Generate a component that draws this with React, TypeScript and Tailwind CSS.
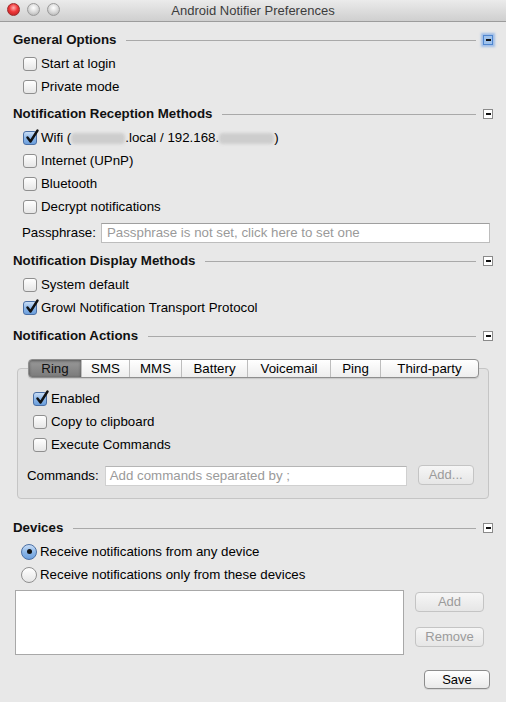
import React from 'react';

const Checkbox: React.FC<{ checked?: boolean }> = ({ checked }) => (
  <span
    className={`relative inline-block w-[14px] h-[14px] rounded-[3px] border shrink-0 ${
      checked
        ? 'border-[#4a6fa5] bg-gradient-to-b from-[#c9ddf5] via-[#8db7e8] to-[#6c9fdc]'
        : 'border-[#8f8f8f] bg-gradient-to-b from-[#ffffff] to-[#e6e6e6]'
    }`}
  >
    {checked && (
      <svg className="absolute left-[1px] top-[-3px]" width="14" height="15" viewBox="0 0 14 15">
        <path d="M2.5 8.5 L5.5 12.5 L12.5 1.5" fill="none" stroke="#111" strokeWidth="2.4" strokeLinecap="round" strokeLinejoin="round" />
      </svg>
    )}
  </span>
);

const Radio: React.FC<{ checked?: boolean }> = ({ checked }) => (
  <span
    className={`flex items-center justify-center w-[16px] h-[16px] rounded-full border shrink-0 ${
      checked
        ? 'border-[#4a6fa5] bg-gradient-to-b from-[#c9ddf5] via-[#8db7e8] to-[#6c9fdc]'
        : 'border-[#8f8f8f] bg-gradient-to-b from-[#ffffff] to-[#e6e6e6]'
    }`}
  >
    {checked && <span className="w-[5px] h-[5px] rounded-full bg-[#111]" />}
  </span>
);

const CheckRow: React.FC<{ checked?: boolean; children: React.ReactNode }> = ({ checked, children }) => (
  <div className="flex items-center h-[23px] gap-[4px] text-[13.3px] text-black">
    <Checkbox checked={checked} />
    <span>{children}</span>
  </div>
);

const SectionHeader: React.FC<{ title: string; focused?: boolean; className?: string }> = ({ title, focused, className }) => (
  <div className={`flex items-center h-[24px] pl-[13px] pr-[13px] ${className ?? ''}`}>
    <span className="text-[13.3px] font-bold text-[#111]">{title}</span>
    <div className="flex-1 h-px bg-[#a9a9a9] ml-[10px] mr-[7px]" />
    {focused ? (
      <span className="flex items-center justify-center w-[10px] h-[10px] border border-[#4f86d0] bg-[#9fc2ec] shadow-[0_0_2px_2px_rgba(110,160,230,0.6)]">
        <span className="w-[5px] h-[2px] bg-[#111]" />
      </span>
    ) : (
      <span className="flex items-center justify-center w-[10px] h-[10px] border border-[#8a8a8a] bg-white">
        <span className="w-[5px] h-[2px] bg-[#111]" />
      </span>
    )}
  </div>
);

const Blur: React.FC<{ w: string }> = ({ w }) => (
  <span className={`inline-block ${w} h-[11px] align-middle rounded-sm bg-[#cdcdcd] blur-[1.5px]`} />
);

const tabs = [
  { name: 'Ring', w: 'w-[52px]' },
  { name: 'SMS', w: 'w-[48px]' },
  { name: 'MMS', w: 'w-[52px]' },
  { name: 'Battery', w: 'w-[66px]' },
  { name: 'Voicemail', w: 'w-[83px]' },
  { name: 'Ping', w: 'w-[50px]' },
  { name: 'Third-party', w: 'w-[98px]' },
];

const MacButton: React.FC<{ label: string; disabled?: boolean; className?: string }> = ({ label, disabled, className }) => (
  <button
    className={`flex items-center justify-center rounded-[4px] border text-[13px] ${
      disabled
        ? 'border-[#c4c4c4] text-[#9b9b9b] bg-gradient-to-b from-[#f6f6f6] to-[#e6e6e6]'
        : 'border-[#8c8c8c] text-black bg-gradient-to-b from-[#ffffff] to-[#e9e9e9] shadow-[0_1px_0_rgba(0,0,0,0.08)]'
    } ${className ?? ''}`}
  >
    {label}
  </button>
);

const App: React.FC = () => {
  return (
    <div className="w-[506px] h-[702px] overflow-hidden bg-[#e8e8e8] font-['Liberation_Sans',Arial,sans-serif] text-black">
      {/* Title bar */}
      <div className="relative flex items-center justify-center h-[22px] bg-gradient-to-b from-[#ebebeb] to-[#cfcfcf] border-b border-[#9c9c9c]">
        <div className="absolute left-[7px] top-[3px] flex gap-[7px]">
          <span className="w-[13px] h-[13px] rounded-full border border-[#9c2b2b] bg-[radial-gradient(circle_at_50%_35%,#ffb3b3_0%,#f0383a_45%,#b11c1f_100%)]" />
          <span className="w-[13px] h-[13px] rounded-full border border-[#9a9a9a] bg-[radial-gradient(circle_at_50%_35%,#ffffff_0%,#d9d9d9_50%,#a9a9a9_100%)]" />
          <span className="w-[13px] h-[13px] rounded-full border border-[#9a9a9a] bg-[radial-gradient(circle_at_50%_35%,#ffffff_0%,#d9d9d9_50%,#a9a9a9_100%)]" />
        </div>
        <span className="text-[13px] text-[#3c3c3c]">Android Notifier Preferences</span>
      </div>

      {/* General Options */}
      <SectionHeader title="General Options" focused className="mt-[6px]" />
      <div className="pl-[23px]">
        <CheckRow>Start at login</CheckRow>
        <CheckRow>Private mode</CheckRow>
      </div>

      {/* Notification Reception Methods */}
      <SectionHeader title="Notification Reception Methods" className="mt-[4px]" />
      <div className="pl-[23px]">
        <CheckRow checked>
          Wifi (<Blur w="w-[54px]" />.local / 192.168.<Blur w="w-[55px]" />)
        </CheckRow>
        <CheckRow>Internet (UPnP)</CheckRow>
        <CheckRow>Bluetooth</CheckRow>
        <CheckRow>Decrypt notifications</CheckRow>
      </div>
      <div className="flex items-center mt-[5px] pl-[22px] pr-[16px] gap-[5px]">
        <span className="text-[13.3px]">Passphrase:</span>
        <div className="flex-1 h-[20px] flex items-center px-[5px] bg-white border border-[#bdbdbd] border-t-[#9f9f9f] text-[13.3px] text-[#9a9a9a]">
          Passphrase is not set, click here to set one
        </div>
      </div>

      {/* Notification Display Methods */}
      <SectionHeader title="Notification Display Methods" className="mt-[6px]" />
      <div className="pl-[23px]">
        <CheckRow>System default</CheckRow>
        <CheckRow checked>Growl Notification Transport Protocol</CheckRow>
      </div>

      {/* Notification Actions */}
      <SectionHeader title="Notification Actions" className="mt-[5px]" />
      <div className="mx-[17px] mt-[11px]">
        <div className="relative z-10 flex pl-[11px]">
          <div className="flex h-[19px] rounded-[4px] border border-[#8e8e8e] overflow-hidden bg-gradient-to-b from-[#ffffff] to-[#ededed] shadow-[0_1px_1px_rgba(0,0,0,0.12)]">
            {tabs.map((t, i) => (
              <div
                key={t.name}
                className={`${t.w} flex items-center justify-center text-[13.3px] ${
                  i === 0
                    ? 'bg-gradient-to-b from-[#9a9a9a] to-[#7b7b7b] shadow-[inset_0_1px_3px_rgba(0,0,0,0.45)] text-[#111]'
                    : 'text-black'
                } ${i > 0 ? 'border-l border-[#bdbdbd]' : ''}`}
              >
                {t.name}
              </div>
            ))}
          </div>
        </div>
        <div className="-mt-[10px] h-[131px] rounded-[4px] border border-[#c5c5c5] bg-[#e2e2e2] pt-[18px] pr-[14px]">
          <div className="pl-[15px]">
            <CheckRow checked>Enabled</CheckRow>
            <CheckRow>Copy to clipboard</CheckRow>
            <CheckRow>Execute Commands</CheckRow>
          </div>
          <div className="flex items-center mt-[10px] pl-[9px]">
            <span className="text-[13.3px]">Commands:</span>
            <div className="w-[302px] ml-[6px] h-[20px] flex items-center px-[4px] bg-white border border-[#d0d0d0] border-t-[#b5b5b5] text-[13.3px] text-[#9a9a9a]">
              Add commands separated by ;
            </div>
            <MacButton label="Add..." disabled className="w-[56px] h-[20px] ml-[11px] -mt-[2px]" />
          </div>
        </div>
      </div>

      {/* Devices */}
      <SectionHeader title="Devices" className="mt-[17px]" />
      <div className="pl-[21px]">
        <div className="flex items-center h-[23px] gap-[3px] text-[13.3px]">
          <Radio checked />
          <span>Receive notifications from any device</span>
        </div>
        <div className="flex items-center h-[23px] gap-[3px] text-[13.3px]">
          <Radio />
          <span>Receive notifications only from these devices</span>
        </div>
      </div>
      <div className="flex mt-[4px] pl-[15px] pr-[22px]">
        <div className="w-[389px] h-[65px] bg-white border border-[#a8a8a8]" />
        <div className="flex flex-col ml-[11px] pt-[2px] gap-[15px]">
          <MacButton label="Add" disabled className="w-[69px] h-[20px]" />
          <MacButton label="Remove" disabled className="w-[69px] h-[20px]" />
        </div>
      </div>
      <div className="flex justify-end pr-[16px] mt-[15px]">
        <MacButton label="Save" className="w-[66px] h-[19px]" />
      </div>
    </div>
  );
};

export default App;
